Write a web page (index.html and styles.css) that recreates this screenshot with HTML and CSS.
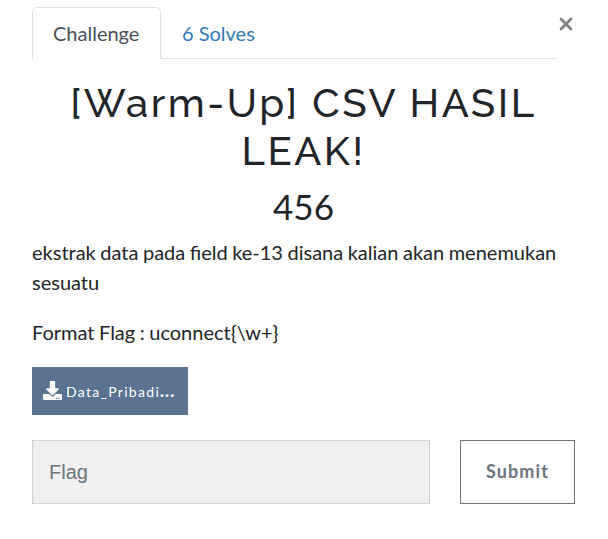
FILE: index.html
```html
<!DOCTYPE html>
<html lang="id">
<head>
<meta charset="utf-8">
<title>Challenge</title>
<link rel="stylesheet" href="styles.css">
</head>
<body>
<main class="modal">
  <header class="top">
    <nav class="tabs">
      <a class="tab active">Challenge</a>
      <a class="tab">6 Solves</a>
    </nav>
    <button class="close" aria-label="Close"><svg width="14" height="14" viewBox="0 0 14 14"><path d="M2 2 12 12M12 2 2 12" fill="none" stroke="#7f7f7f" stroke-width="2.7" stroke-linecap="round"/></svg></button>
  </header>
  <h2 class="name">[Warm-Up] CSV HASIL LEAK!</h2>
  <h3 class="value">456</h3>
  <div class="desc">
    <p>ekstrak data pada field ke-13 disana kalian akan menemukan sesuatu</p>
    <p>Format Flag : uconnect{\w+}</p>
  </div>
  <a class="file"><svg class="icon" width="19" height="19" viewBox="0 0 512 512"><path fill="#fff" d="M200 0h112c10 0 16 11 16 24v168h80c18 0 27 21 14 34L270 378c-7 7-20 7-28 0L90 226c-13-13-4-34 14-34h80V24c0-13 6-24 16-24zm312 376v112c0 13-11 24-24 24H24c-13 0-24-11-24-24V376c0-13 11-24 24-24h147l49 49c20 20 52 20 72 0l49-49h147c13 0 24 11 24 24zM388 464a20 20 0 1 0-40 0 20 20 0 0 0 40 0zm64 0a20 20 0 1 0-40 0 20 20 0 0 0 40 0z"/></svg><span>Data_Pribadi<b class="dots">...</b></span></a>
  <form class="submit-row">
    <input class="flag" type="text" placeholder="Flag">
    <button class="submit" type="button">Submit</button>
  </form>
</main>
</body>
</html>
```
FILE: styles.css
```css
* { box-sizing: border-box; }
body {
  margin: 0;
  background: #fff;
  color: #212529;
  font: 20px/30px Lato, sans-serif;
}
.modal { padding: 7px 32px 0; }
.top { display: flex; }
.tabs {
  display: flex;
  width: 525px;
  height: 52px;
  border-bottom: 1px solid #dee2e6;
}
.tab {
  height: 52px;
  padding: 10px 20px;
  border: 1px solid transparent;
  color: #337ab7;
}
.active {
  width: 129px;
  color: #495057;
  background: #fff;
  border-color: #dee2e6 #dee2e6 #fff;
  border-radius: 5px 5px 0 0;
}
.close {
  display: flex;
  padding: 0;
  margin: 10px 0 0 2px;
  border: 0;
  background: none;
}
.name, .value {
  width: 543px;
  margin: 0;
  text-align: center;
}
.name {
  margin-top: 20px;
  font: 460 40px/48px Raleway, Lato, sans-serif;
  letter-spacing: 2.55px;
}
.value {
  margin-top: 10px;
  font-size: 35px;
  font-weight: 400;
  line-height: 42px;
}
.desc {
  width: 543px;
  margin-top: 10px;
  word-spacing: -0.6px;
}
.desc p { margin: 0 0 20px; }
.file {
  display: flex;
  align-items: center;
  gap: 4px;
  width: 156px;
  height: 48px;
  padding-left: 11px;
  background: #5b7290;
  color: #fff;
  font-size: 14px;
  letter-spacing: 1.3px;
  white-space: nowrap;
}
.file span { padding-top: 1px; }
.icon { margin-top: -1px; }
.dots { font-size: 17px; font-weight: 900; letter-spacing: 1px; line-height: 14px; }
.submit-row {
  display: flex;
  gap: 30px;
  margin-top: 25px;
}
.flag {
  width: 398px;
  height: 64px;
  padding: 0 16px;
  border: 1px solid #ced4da;
  border-radius: 0;
  background: #f0f0f0;
  font: 20px "Liberation Sans", sans-serif;
}
.flag::placeholder { color: #6c757d; opacity: 1; }
.submit {
  width: 115px;
  height: 64px;
  padding: 0 0 2px;
  border: 1px solid #6c757d;
  background: #fff;
  color: #6c757d;
  font: 700 18px Lato, sans-serif;
  letter-spacing: 1.1px;
}
```
